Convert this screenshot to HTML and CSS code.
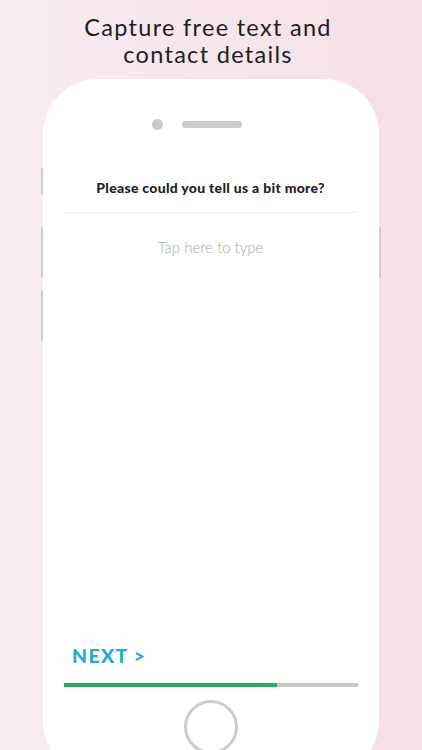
FILE: index.html
```html
<!DOCTYPE html>
<html>
<head>
<meta charset="utf-8">
<link rel="stylesheet" href="styles.css">
</head>
<body>
<div class="page">
  <h1 class="title">Capture free text and<br>contact details</h1>
  <div class="phone">
    <span class="side-btn side-l1"></span>
    <span class="side-btn side-l2"></span>
    <span class="side-btn side-l3"></span>
    <span class="side-btn side-r1"></span>
    <div class="sensors">
      <span class="camera"></span>
      <span class="speaker"></span>
    </div>
    <div class="screen">
      <div class="question">Please could you tell us a bit more?</div>
      <div class="divider"></div>
      <div class="placeholder">Tap here to type</div>
      <div class="spacer"></div>
      <div class="next">NEXT &gt;</div>
      <div class="progress"><div class="progress-fill" style="width:72.4%"></div></div>
    </div>
    <div class="home"></div>
  </div>
</div>
</body>
</html>
```
FILE: styles.css
```css
html, body {
  margin: 0;
  padding: 0;
}
body {
  width: 422px;
  height: 750px;
  overflow: hidden;
  background: linear-gradient(90deg, #f7edf3 0%, #f6e6ec 50%, #f7dfe6 100%);
  font-family: "Lato", "Liberation Sans", sans-serif;
}
.page {
  display: flex;
  flex-direction: column;
  align-items: center;
}
.title {
  margin: 14px 0 0 0;
  padding-right: 6px;
  font-size: 23.5px;
  line-height: 27px;
  font-weight: 400;
  letter-spacing: 1.3px;
  color: #1e1e1e;
  text-align: center;
}
.phone {
  position: relative;
  margin-top: 11px;
  width: 336px;
  height: 697px;
  background: #fff;
  border-radius: 55px;
  display: flex;
  flex-direction: column;
  align-items: center;
  flex-shrink: 0;
}
.side-btn {
  position: absolute;
  width: 2px;
  background: #cfcfcf;
}
.side-l1 { left: -2px; top: 89px; height: 27px; }
.side-l2 { left: -2px; top: 148px; height: 51px; }
.side-l3 { left: -2px; top: 211px; height: 51px; }
.side-r1 { right: -2px; top: 148px; height: 51px; }
.sensors {
  margin-top: 40px;
  display: flex;
  align-items: center;
  gap: 19px;
  margin-left: -28px;
}
.camera {
  width: 11px;
  height: 11px;
  border-radius: 50%;
  background: #cccccc;
}
.speaker {
  width: 60px;
  height: 7px;
  border-radius: 4px;
  background: #cccccc;
}
.screen {
  align-self: stretch;
  margin: 0 22px 0 21px;
  display: flex;
  flex-direction: column;
  height: 557px;
}
.question {
  margin-top: 48px;
  text-align: center;
  font-size: 14px;
  font-weight: 900;
  letter-spacing: 0.3px;
  color: #1f1f1f;
  line-height: 20px;
}
.divider {
  margin-top: 14px;
  height: 1px;
  background: #efefef;
}
.placeholder {
  margin-top: 24px;
  text-align: center;
  font-size: 15px;
  font-weight: 300;
  color: #a9a9a9;
  line-height: 20px;
}
.spacer {
  flex: 1;
}
.next {
  margin-left: 8px;
  font-size: 19.5px;
  font-weight: 900;
  letter-spacing: 1.3px;
  color: #29a9d7;
  line-height: 24px;
}
.progress {
  margin-top: 15px;
  height: 4px;
  background: #c6c6cb;
  margin-right: -1px;
}
.progress-fill {
  height: 100%;
  background: #2bab5b;
}
.home {
  margin-top: 13px;
  width: 48px;
  height: 48px;
  border: 3px solid #cccccc;
  border-radius: 50%;
}
```
